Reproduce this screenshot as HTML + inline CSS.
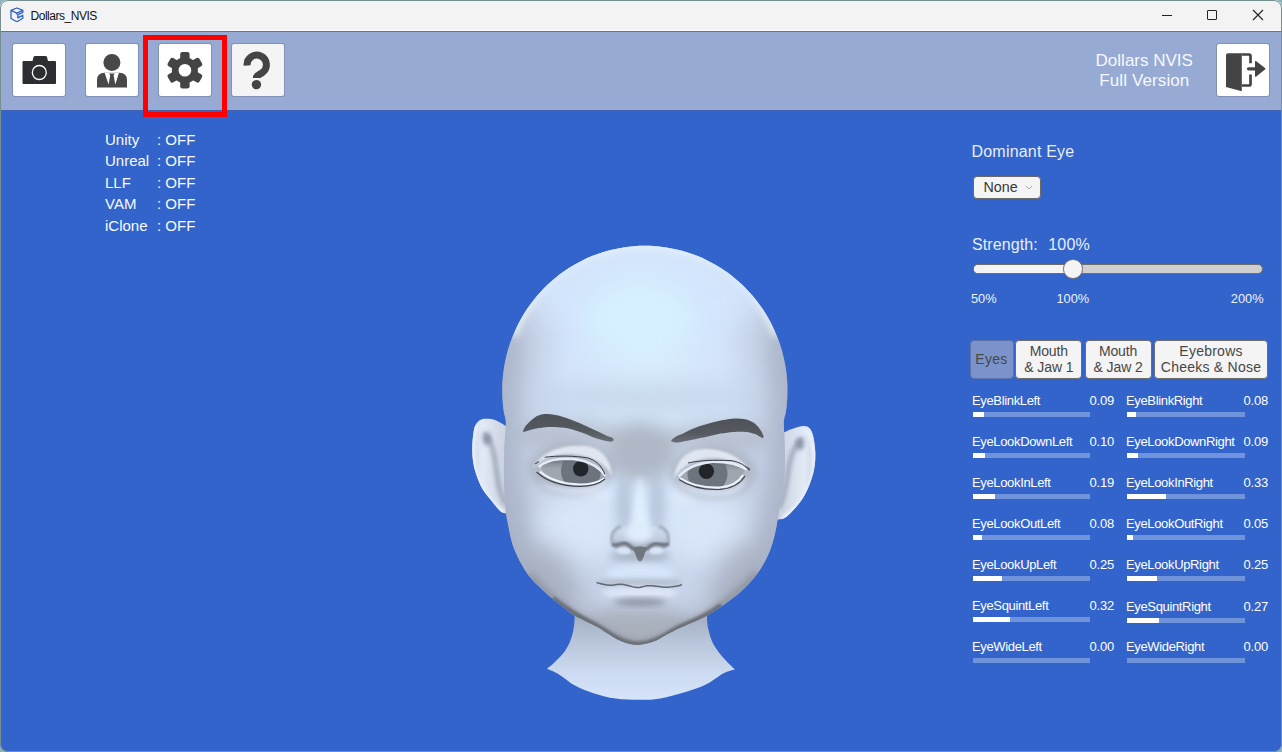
<!DOCTYPE html>
<html><head><meta charset="utf-8">
<style>
*{margin:0;padding:0;box-sizing:border-box}
html,body{width:1282px;height:752px;overflow:hidden;background:#8ab4bc}
body{font-family:"Liberation Sans",sans-serif;position:relative}
.abs{position:absolute}
#win{position:absolute;left:0;top:0;width:1282px;height:752px;border-radius:8px;overflow:hidden;background:#f3f3f3}
#main{position:absolute;left:0;top:110px;width:1282px;height:642px;background:#3264cc}
#frame{position:absolute;left:0;top:0;width:1282px;height:752px;border-radius:8px;border:1px solid #76908f;pointer-events:none}
#title{position:absolute;left:0;top:0;width:1282px;height:30px;background:#f3f3f3}
#tline{position:absolute;left:0;top:30px;width:1282px;height:1px;background:#fbfbf9}
#tline2{position:absolute;left:0;top:31px;width:1282px;height:1px;background:#5573b5}
#toolbar{position:absolute;left:0;top:32px;width:1282px;height:78px;background:#97aad4}
.btn{position:absolute;top:44px;width:52px;height:52px;background:#fff;border-radius:2px;box-shadow:0 0 0 1px rgba(90,100,130,.35)}
.t{position:absolute;white-space:nowrap;line-height:1;color:#fff}
.lbl{font-size:13px;letter-spacing:-0.35px}
.val{font-size:13px;text-align:right;letter-spacing:-0.2px}
.bar{position:absolute;height:5px;background:#7094dc}
.fill{position:absolute;left:0;top:0;height:5px;background:#fff}
.tab{position:absolute;top:339.5px;height:39.3px;background:#f4f4f4;border:1px solid #6c6c6c;border-radius:4px;color:#474747;font-size:14px;line-height:16.4px;text-align:center;display:flex;align-items:center;justify-content:center;padding-top:0.5px}
</style></head><body>
<div id="win">
  <div id="main"></div>
  <div id="title"></div>
  <div id="tline"></div>
  <div id="tline2"></div>
  <!-- app icon -->
  <svg class="abs" style="left:0;top:0" width="30" height="30" viewBox="0 0 30 30">
    <g fill="none" stroke="#2f60c0" stroke-width="1.3" stroke-linejoin="round">
      <path d="M11,10.4 L16.9,8 L22.8,10.4 L16.9,13.1 Z"/>
      <path d="M11,10.4 V18.5 L16.9,21.7"/>
      <path d="M16.9,13.1 V14.5"/>
      <path d="M22.8,10.4 V12.3 L17.8,14.8 V17.8 L22.8,15.3 V18.3 L16.9,21.7"/>
    </g>
  </svg>
  <div class="t" style="left:30.5px;top:10px;font-size:12px;color:#111;letter-spacing:-0.47px">Dollars_NVIS</div>
  <!-- window controls -->
  <div class="abs" style="left:1162px;top:15px;width:10px;height:1px;background:#222"></div>
  <div class="abs" style="left:1207px;top:10px;width:10px;height:10px;border:1px solid #222;border-radius:1px"></div>
  <svg class="abs" style="left:1252px;top:9px" width="12" height="12" viewBox="0 0 12 12"><path d="M1 1 L11 11 M11 1 L1 11" stroke="#222" stroke-width="1.1"/></svg>

  <div id="toolbar"></div>
  <div class="abs" style="left:0;top:110px;width:1282px;height:1px;background:#4062b0"></div>
  <div class="btn" style="left:13px"></div>
  <div class="btn" style="left:86px"></div>
  <div class="btn" style="left:159px"></div>
  <div class="btn" style="left:232px;background:#f4f4f4"></div>
  <div class="btn" style="left:1217px"></div>
  <svg class="abs" style="left:0;top:0" width="1282" height="110" viewBox="0 0 1282 110">
    <!-- camera -->
    <path d="M23.5,61 H32.5 L33.5,57 Q34,56 35,56 H45.5 Q46.5,56 47,57 L48,61 H55 Q56,61 56,62 V83 Q56,84 55,84 H23.5 Q22.5,84 22.5,83 V62 Q22.5,61 23.5,61 Z" fill="#2c2e31"/>
    <circle cx="39.3" cy="72.5" r="7" fill="none" stroke="#fff" stroke-width="1.3"/>
    <!-- person -->
    <circle cx="111.9" cy="62.4" r="8.5" fill="#484848"/>
    <path d="M97,87.5 V80 Q97,73 104.5,72.8 H119.5 Q127,73 127,80 V87.5 Z" fill="#484848"/>
    <path d="M104.6,72.8 L108.6,84.5 L110.2,75.5 L109.2,73.6 H114.6 L113.6,75.5 L115.3,84.5 L119,72.8 Z" fill="#fff"/>
    <!-- gear -->
    <g transform="translate(184.9,70.2)" fill="#444">
      <circle r="13"/><rect x="-4.7" y="-18.3" width="9.4" height="10" rx="2.2" transform="rotate(0)"/><rect x="-4.7" y="-18.3" width="9.4" height="10" rx="2.2" transform="rotate(60)"/><rect x="-4.7" y="-18.3" width="9.4" height="10" rx="2.2" transform="rotate(120)"/><rect x="-4.7" y="-18.3" width="9.4" height="10" rx="2.2" transform="rotate(180)"/><rect x="-4.7" y="-18.3" width="9.4" height="10" rx="2.2" transform="rotate(240)"/><rect x="-4.7" y="-18.3" width="9.4" height="10" rx="2.2" transform="rotate(300)"/>
      <circle r="6.3" fill="#fff"/>
    </g>
    <!-- question -->
    <path d="M247.1,65.5 A9.65,9.65 0 1 1 262.5,72.5 C258,75.5 256.4,76 256.4,78" fill="none" stroke="#444" stroke-width="7"/>
    <circle cx="256.4" cy="84.6" r="4.7" fill="#444"/>
    <!-- exit -->
    <path d="M1228,53.2 H1241.8 V91.3 L1226,87.1 V55.2 Q1226,53.2 1228,53.2 Z" fill="#444"/>
    <path d="M1241.8,54.5 H1249 Q1250.5,54.5 1250.5,56 V63.2 M1250.5,74.4 V84 Q1250.5,85.5 1249,85.5 H1241.8" fill="none" stroke="#444" stroke-width="2.7"/>
    <path d="M1248.5,68.8 H1257" stroke="#444" stroke-width="3.2" stroke-linecap="round"/>
    <path d="M1255.6,61.5 L1264.9,68.8 L1255.6,76.2 Z" fill="#444" stroke="#444" stroke-width="1.2" stroke-linejoin="round"/>
  </svg>
  <div class="abs" style="left:143px;top:35px;width:84px;height:82px;border:5px solid #ff0000"></div>

  <div class="t" style="left:1095.6px;top:52.2px;font-size:17px;color:#f6f8fd">Dollars NVIS</div>
  <div class="t" style="left:1099.2px;top:72px;font-size:17px;color:#f6f8fd;letter-spacing:0.12px">Full Version</div>

  <!-- head -->
  <svg class="abs" style="left:0;top:0" width="1282" height="752" viewBox="0 0 1282 752">
    <defs>
      <linearGradient id="gNeck" x1="0" y1="617" x2="0" y2="700" gradientUnits="userSpaceOnUse">
        <stop offset="0" stop-color="#a4afc2"/>
        <stop offset="0.3" stop-color="#b8c5da"/>
        <stop offset="0.7" stop-color="#cedcf3"/>
        <stop offset="1" stop-color="#d6e4fa"/>
      </linearGradient>
      <radialGradient id="gHead" cx="0" cy="0" r="1" fx="0" fy="-0.4" gradientUnits="userSpaceOnUse" gradientTransform="translate(645,425) scale(152,255)">
        <stop offset="0" stop-color="#dbefff"/>
        <stop offset="0.5" stop-color="#d3e4fb"/>
        <stop offset="0.8" stop-color="#c6d2e8"/>
        <stop offset="1" stop-color="#adb5c5"/>
      </radialGradient>
      <linearGradient id="gEarL" x1="472" y1="0" x2="506" y2="0" gradientUnits="userSpaceOnUse">
        <stop offset="0" stop-color="#ccd5e4"/>
        <stop offset="0.3" stop-color="#e2eaf6"/>
        <stop offset="1" stop-color="#cad2e0"/>
      </linearGradient>
      <linearGradient id="gEarR" x1="815" y1="0" x2="779" y2="0" gradientUnits="userSpaceOnUse">
        <stop offset="0" stop-color="#ccd5e4"/>
        <stop offset="0.3" stop-color="#e2eaf6"/>
        <stop offset="1" stop-color="#cad2e0"/>
      </linearGradient>
      <linearGradient id="gBrow" x1="0" y1="0" x2="0" y2="1">
        <stop offset="0" stop-color="#4f5258"/>
        <stop offset="0.6" stop-color="#555960"/>
        <stop offset="1" stop-color="#6a6e76"/>
      </linearGradient>
      <linearGradient id="gNose" x1="0" y1="527" x2="0" y2="549" gradientUnits="userSpaceOnUse">
        <stop offset="0" stop-color="#cfdbee"/>
        <stop offset="0.5" stop-color="#c4cfe2"/>
        <stop offset="1" stop-color="#98a2b3"/>
      </linearGradient>
      <clipPath id="cHead"><path id="headPath" d="M783.8,423.0 C784.0,416.7 785.3,415.9 785.8,412.4 C786.4,408.8 786.8,405.2 787.0,401.6 C787.3,398.0 787.4,394.4 787.4,390.8 C787.5,387.2 787.3,383.5 787.1,379.9 C786.8,376.3 786.4,372.7 785.9,369.2 C785.4,365.6 784.7,362.0 783.9,358.5 C783.1,355.0 782.2,351.5 781.2,348.0 C780.1,344.6 778.9,341.2 777.6,337.8 C776.3,334.5 774.9,331.1 773.4,327.9 C771.8,324.6 770.2,321.4 768.4,318.3 C766.6,315.2 764.7,312.1 762.7,309.1 C760.7,306.1 758.6,303.2 756.4,300.4 C754.2,297.6 751.9,294.8 749.4,292.2 C747.0,289.5 744.5,287.0 741.9,284.5 C739.3,282.0 736.6,279.7 733.8,277.4 C731.0,275.2 728.2,273.0 725.2,271.0 C722.3,269.0 719.3,267.0 716.2,265.2 C713.1,263.4 710.0,261.7 706.8,260.2 C703.6,258.6 700.3,257.1 697.0,255.8 C693.7,254.5 690.3,253.3 686.9,252.2 C683.5,251.2 680.1,250.2 676.6,249.4 C673.1,248.6 669.6,248.0 666.1,247.4 C662.6,246.9 659.1,246.5 655.5,246.2 C652.0,245.9 648.4,245.8 644.9,245.8 C641.3,245.8 637.7,245.9 634.2,246.2 C630.6,246.5 627.1,246.9 623.6,247.4 C620.1,248.0 616.6,248.6 613.1,249.4 C609.6,250.2 606.2,251.2 602.8,252.2 C599.4,253.3 596.0,254.5 592.7,255.8 C589.4,257.1 586.1,258.6 582.9,260.2 C579.7,261.7 576.6,263.4 573.5,265.2 C570.4,267.0 567.4,269.0 564.5,271.0 C561.5,273.0 558.7,275.2 555.9,277.4 C553.1,279.7 550.4,282.0 547.8,284.5 C545.2,287.0 542.7,289.5 540.3,292.2 C537.8,294.8 535.5,297.6 533.3,300.4 C531.1,303.2 529.0,306.1 527.0,309.1 C525.0,312.1 523.1,315.2 521.3,318.3 C519.5,321.4 517.9,324.6 516.3,327.9 C514.8,331.1 513.4,334.5 512.1,337.8 C510.8,341.2 509.6,344.6 508.5,348.0 C507.5,351.5 506.6,355.0 505.8,358.5 C505.0,362.0 504.3,365.6 503.8,369.2 C503.3,372.7 502.9,376.3 502.6,379.9 C502.4,383.5 502.2,387.2 502.3,390.8 C502.3,394.4 502.4,398.0 502.7,401.6 C502.9,405.2 503.3,408.8 503.9,412.4 C504.4,415.9 505.8,416.7 505.9,423.0 C505.9,429.3 504.5,440.5 504.2,450.0 C503.9,459.5 503.8,470.0 504.0,480.0 C504.2,490.0 504.9,502.7 505.6,510.0 C506.3,517.3 507.1,518.9 508.0,523.9 C508.9,528.9 510.0,535.1 511.3,539.9 C512.6,544.7 514.0,548.6 515.7,552.6 C517.4,556.6 519.2,560.0 521.3,563.8 C523.4,567.6 525.6,571.5 528.5,575.2 C531.4,578.9 534.9,582.4 538.6,586.1 C542.3,589.8 546.6,593.8 550.8,597.3 C555.0,600.8 559.6,604.2 563.6,607.3 C567.6,610.4 571.1,613.5 574.7,615.8 C578.4,618.1 581.7,619.3 585.5,621.2 C589.3,623.1 593.3,624.7 597.4,627.0 C601.5,629.3 605.8,632.5 610.0,635.0 C614.2,637.5 617.7,640.1 622.4,641.8 C627.1,643.5 632.8,645.0 638.0,645.0 C643.2,645.0 648.9,643.3 653.6,641.6 C658.3,639.9 661.8,637.2 666.0,635.0 C670.2,632.8 674.6,630.4 678.6,628.5 C682.6,626.6 686.3,625.1 690.0,623.5 C693.7,621.9 697.3,620.6 701.0,618.8 C704.7,617.0 708.0,615.0 712.0,612.5 C716.0,610.0 720.7,607.0 725.3,603.7 C729.9,600.4 735.2,596.5 739.7,592.5 C744.2,588.5 748.7,584.0 752.4,579.7 C756.1,575.4 759.1,571.3 762.0,566.5 C764.9,561.7 767.7,556.2 769.8,551.0 C771.9,545.8 773.4,540.4 774.7,535.1 C776.0,529.8 776.2,528.3 777.8,519.1 C779.3,509.9 782.8,491.5 784.0,480.0 C785.2,468.5 785.0,459.5 785.0,450.0 C785.0,440.5 783.7,429.3 783.8,423.0 Z"/></clipPath>
      <clipPath id="cEarL"><path d="M506,426 C504.8,425.3 501.1,422.8 498.6,421.7 C496.2,420.6 494.0,419.5 491.3,419.1 C488.6,418.7 484.9,418.4 482.5,419.1 C480.1,419.8 478.1,421.3 476.7,423.2 C475.2,425.1 474.5,426.6 473.8,430.5 C473.1,434.4 472.4,441.4 472.3,446.5 C472.2,451.6 472.3,456.3 473.0,461.2 C473.7,466.1 475.1,471.2 476.7,475.8 C478.3,480.4 480.1,484.9 482.5,489.0 C484.9,493.1 488.4,497.0 491.3,500.6 C494.2,504.2 497.7,508.8 500.1,510.9 C502.6,513.0 505.0,513.1 506.0,513.5 Z"/></clipPath>
      <clipPath id="cEarR"><path d="M782,433.3 C783.6,432.6 788.3,430.1 791.9,428.9 C795.5,427.7 800.7,426.1 803.6,426.0 C806.5,425.9 807.9,426.6 809.5,428.2 C811.1,429.8 812.1,431.6 813.1,435.5 C814.1,439.4 815.0,446.4 815.3,451.5 C815.5,456.6 815.3,461.3 814.6,466.2 C813.9,471.1 812.7,475.7 810.9,480.8 C809.1,485.9 806.5,492.0 803.6,496.9 C800.7,501.8 796.6,506.5 793.4,510.0 C790.2,513.5 787.3,516.5 784.6,518.1 C781.9,519.7 778.3,519.5 777.0,519.8 Z"/></clipPath>
      <clipPath id="cEyeL"><path d="M541.2,467.9 C544,463 548,461 551.9,460.8 C558,459.8 562,459.5 567.9,459.6 C574,460 579,460.8 583.8,462 C589,463.5 592,465 595.8,467.1 C600,470 603,473 605.4,476.7 C604,479 602,480.5 599.8,481.5 C594,483.5 589,484.5 583.8,484.3 C578,484.3 573,484.3 567.9,483.9 C561,482.5 556,480.5 551.9,478.3 C548,476 545,474 543.1,471.9 Z"/></clipPath>
      <clipPath id="cEyeR"><path d="M679.5,477 C683,472 688,467.5 693,465.5 C699,463.5 706,462.5 712.8,462.5 C720,462.5 727,463 733,464 C738,465.5 742,467.5 745,470 C742,475 740,479 737,481.5 C731,485 725,486.5 718.2,487 C712,487.3 705,487.3 698,486.2 C691,484.5 685,481.5 679.5,477 Z"/></clipPath>
      <filter id="b05" x="-20%" y="-20%" width="140%" height="140%"><feGaussianBlur stdDeviation="0.5"/></filter>
      <filter id="b1" x="-20%" y="-20%" width="140%" height="140%"><feGaussianBlur stdDeviation="1"/></filter>
      <filter id="b2" x="-30%" y="-30%" width="160%" height="160%"><feGaussianBlur stdDeviation="2"/></filter>
      <filter id="b3" x="-30%" y="-30%" width="160%" height="160%"><feGaussianBlur stdDeviation="3"/></filter>
      <filter id="b4" x="-30%" y="-30%" width="160%" height="160%"><feGaussianBlur stdDeviation="4"/></filter>
      <filter id="b5" x="-40%" y="-40%" width="180%" height="180%"><feGaussianBlur stdDeviation="5"/></filter>
      <filter id="b8" x="-50%" y="-50%" width="200%" height="200%"><feGaussianBlur stdDeviation="8"/></filter>
      <filter id="b12" x="-60%" y="-60%" width="220%" height="220%"><feGaussianBlur stdDeviation="12"/></filter>
    </defs>
    <!-- neck -->
    <path d="M574.7,590 L574.7,616.3 C574.6,618.0 574.5,622.6 573.9,626.4 C573.3,630.2 572.4,635.0 571.0,639.0 C569.6,643.0 567.9,646.6 565.3,650.4 C562.7,654.2 558.2,658.7 555.2,661.8 C552.2,664.9 548.4,667.6 547.0,668.8 C549.0,669.7 554.3,671.6 559.0,674.4 C563.7,677.2 569.5,682.6 575.4,685.8 C581.3,689.0 587.6,691.3 594.3,693.4 C601.0,695.5 608.2,697.4 615.8,698.5 C623.4,699.6 632.6,699.8 640.0,699.8 C647.4,699.8 652.7,699.8 660.3,698.5 C667.9,697.2 677.9,694.4 685.5,692.1 C693.1,689.8 699.5,687.8 705.8,684.6 C712.1,681.5 718.7,675.7 723.5,673.2 C728.3,670.7 732.9,670.0 734.8,669.4 C732.9,667.5 727.1,662.2 723.5,658.0 C719.9,653.8 715.8,648.9 713.3,644.1 C710.8,639.3 709.3,633.4 708.3,629.0 C707.2,624.6 707.2,619.5 707.0,617.6 L707,590 Z" fill="url(#gNeck)"/>
    <!-- ears -->
    <path d="M506,426 C504.8,425.3 501.1,422.8 498.6,421.7 C496.2,420.6 494.0,419.5 491.3,419.1 C488.6,418.7 484.9,418.4 482.5,419.1 C480.1,419.8 478.1,421.3 476.7,423.2 C475.2,425.1 474.5,426.6 473.8,430.5 C473.1,434.4 472.4,441.4 472.3,446.5 C472.2,451.6 472.3,456.3 473.0,461.2 C473.7,466.1 475.1,471.2 476.7,475.8 C478.3,480.4 480.1,484.9 482.5,489.0 C484.9,493.1 488.4,497.0 491.3,500.6 C494.2,504.2 497.7,508.8 500.1,510.9 C502.6,513.0 505.0,513.1 506.0,513.5 Z" fill="url(#gEarL)"/>
    <g clip-path="url(#cEarL)">
      <path d="M477,424 C471,440 471,465 480,485 C487,498 495,507 504,513" fill="none" stroke="#e6eefa" stroke-width="5" filter="url(#b1)"/>
      <path d="M484,433 C490,438 494,450 496,468 C498,484 500,496 506,504" fill="none" stroke="#98a2b4" stroke-width="4" filter="url(#b2)"/>
      <ellipse cx="487" cy="439" rx="4" ry="6" fill="#8a94a6" filter="url(#b2)"/>
      <path d="M506,425 V513" stroke="#a8b2c4" stroke-width="6" filter="url(#b2)"/>
    </g>
    <path d="M782,433.3 C783.6,432.6 788.3,430.1 791.9,428.9 C795.5,427.7 800.7,426.1 803.6,426.0 C806.5,425.9 807.9,426.6 809.5,428.2 C811.1,429.8 812.1,431.6 813.1,435.5 C814.1,439.4 815.0,446.4 815.3,451.5 C815.5,456.6 815.3,461.3 814.6,466.2 C813.9,471.1 812.7,475.7 810.9,480.8 C809.1,485.9 806.5,492.0 803.6,496.9 C800.7,501.8 796.6,506.5 793.4,510.0 C790.2,513.5 787.3,516.5 784.6,518.1 C781.9,519.7 778.3,519.5 777.0,519.8 Z" fill="url(#gEarR)"/>
    <g clip-path="url(#cEarR)">
      <path d="M806,428 C815,440 816,462 812,480 C806,498 795,510 782,519" fill="none" stroke="#e6eefa" stroke-width="5" filter="url(#b1)"/>
      <path d="M802,438 C796,444 790,456 788,472 C786,488 784,498 779,508" fill="none" stroke="#98a2b4" stroke-width="4" filter="url(#b2)"/>
      <ellipse cx="800" cy="444" rx="4" ry="6" fill="#8a94a6" filter="url(#b2)"/>
      <path d="M780,430 V520" stroke="#a8b2c4" stroke-width="6" filter="url(#b2)"/>
    </g>
    <!-- head base -->
    <use href="#headPath" fill="url(#gHead)"/>
    <g clip-path="url(#cHead)">
      <!-- edge darkening -->
      <path d="M512,335 C506,360 503,390 503,430 C503,480 508,530 520,560 C530,580 548,598 570,612" fill="none" stroke="#a8b2c8" stroke-width="34" opacity="0.6" filter="url(#b12)"/>
      <path d="M778,335 C784,360 787,390 787,430 C787,480 782,530 770,560 C760,580 742,598 720,612" fill="none" stroke="#a8b2c8" stroke-width="34" opacity="0.6" filter="url(#b12)"/>
      <!-- top rim light -->
      <path d="M512,335 C532,282 588,246 645,245 C702,246 758,282 778,335" fill="none" stroke="#effbff" stroke-width="10" opacity="0.9" filter="url(#b4)"/>
      <!-- forehead light -->
      <ellipse cx="645" cy="295" rx="115" ry="48" fill="#d4e6fd" opacity="0.85" filter="url(#b12)"/>
      <ellipse cx="640" cy="318" rx="55" ry="38" fill="#d6f1ff" opacity="0.9" filter="url(#b12)"/>
      <ellipse cx="643" cy="398" rx="105" ry="16" fill="#bccae0" opacity="0.55" filter="url(#b12)"/>
      <!-- glabella / brow gray -->
      <ellipse cx="641" cy="452" rx="36" ry="30" fill="#a9b0bd" opacity="0.85" filter="url(#b8)"/>
      <ellipse cx="570" cy="436" rx="55" ry="16" fill="#aeb4c0" opacity="0.65" filter="url(#b8)"/>
      <ellipse cx="716" cy="439" rx="55" ry="16" fill="#aeb4c0" opacity="0.65" filter="url(#b8)"/>
      <!-- cheeks light -->
      <ellipse cx="578" cy="528" rx="40" ry="34" fill="#dbe8fa" opacity="0.85" filter="url(#b12)"/>
      <ellipse cx="705" cy="528" rx="40" ry="34" fill="#dbe8fa" opacity="0.85" filter="url(#b12)"/>
      <!-- under-eye highlight -->
      <ellipse cx="598" cy="492" rx="14" ry="9" fill="#e0ecfc" opacity="0.8" filter="url(#b5)"/>
      <ellipse cx="684" cy="495" rx="14" ry="9" fill="#e0ecfc" opacity="0.8" filter="url(#b5)"/>
      <!-- lower face sides gray -->
      <ellipse cx="545" cy="585" rx="30" ry="40" fill="#a4acba" opacity="0.6" filter="url(#b12)"/>
      <ellipse cx="745" cy="585" rx="30" ry="40" fill="#a4acba" opacity="0.6" filter="url(#b12)"/>
      <!-- chin gray -->
      <ellipse cx="638" cy="628" rx="62" ry="20" fill="#a7aeba" opacity="0.9" filter="url(#b8)"/>
      <!-- jaw rim -->
      <path d="M528,575 C540,590 558,604 575,616 C590,624 610,640 638,645 C665,641 690,624 707,616 C725,604 745,588 758,574" fill="none" stroke="#8a909a" stroke-width="9" opacity="0.8" filter="url(#b3)"/>
      <path d="M552,599 C565,610 585,621 597,627 C610,635 622,645 638,645 C656,645 668,634 680,628 C695,622 710,615 722,606" fill="none" stroke="#6c7077" stroke-width="7" filter="url(#b1)"/>
      <!-- eye sockets -->
      <ellipse cx="572" cy="468" rx="44" ry="26" fill="#a8aebb" opacity="0.75" filter="url(#b5)"/>
      <ellipse cx="713" cy="472" rx="44" ry="26" fill="#a8aebb" opacity="0.75" filter="url(#b5)"/>
      <path d="M533,468 C542,450 565,444 586,446 C602,448 611,460 612,476 C604,462 590,455 570,454 C552,454 541,460 533,468 Z" fill="#e0e6f1" filter="url(#b1)"/>
      <path d="M751,474 C743,456 722,448 703,449 C686,450 676,461 674,478 C683,465 696,458 714,458 C732,459 744,465 751,474 Z" fill="#e0e6f1" filter="url(#b1)"/>
      <path d="M538,482 C550,492 570,496 590,494 C600,492 606,486 608,478 C600,486 590,488 578,488 C560,488 548,486 538,482 Z" fill="#dbe5f5" opacity="0.8" filter="url(#b2)"/>
      <path d="M676,482 C688,494 708,498 726,496 C738,494 746,486 748,476 C740,485 730,490 718,490 C700,490 688,487 676,482 Z" fill="#dbe5f5" opacity="0.8" filter="url(#b2)"/>
      <!-- nose bridge -->
      <ellipse cx="624" cy="505" rx="8" ry="30" fill="#a6b1c6" opacity="0.55" filter="url(#b5)"/>
      <ellipse cx="657" cy="505" rx="8" ry="30" fill="#a6b1c6" opacity="0.55" filter="url(#b5)"/>
      <path d="M638,478 C636,495 633,512 631,530 L649,530 C647,512 644,495 642,478 Z" fill="#e2f0ff" opacity="0.9" filter="url(#b3)"/>
      <!-- nose -->
      <ellipse cx="640" cy="556" rx="30" ry="7" fill="#98a1b0" opacity="0.55" filter="url(#b3)"/>
      <path d="M611.6,541 C611.5,531 618,526.5 627,527 L653,527 C662,526.5 669,531 668.8,542 C668,548 664,550 656,549 L624,549 C616,550 612,548 611.6,541 Z" fill="url(#gNose)" filter="url(#b1)"/>
      <path d="M613.5,546 C609.5,538 612,529 621,526.5" fill="none" stroke="#a3adbf" stroke-width="3" filter="url(#b1)"/>
      <path d="M667,546 C670.5,538 668,529 659,526.5" fill="none" stroke="#a3adbf" stroke-width="3" filter="url(#b1)"/>
      <ellipse cx="639" cy="533" rx="13" ry="10" fill="#dfedfd" filter="url(#b3)"/>
      <ellipse cx="624" cy="550.5" rx="7.5" ry="3.8" fill="#d8e4f6" filter="url(#b1)"/>
      <ellipse cx="656" cy="550.5" rx="7.5" ry="3.8" fill="#d8e4f6" filter="url(#b1)"/>
      <path d="M612.5,544 C615,547 619,544 623.6,543.2 C628,543.5 631,546.5 633.5,550" fill="none" stroke="#6c717b" stroke-width="3.2" filter="url(#b1)"/>
      <path d="M646.5,550 C649,546.5 652,543.8 656.5,543.6 C661,543.8 664.5,547 668.5,543.5" fill="none" stroke="#6c717b" stroke-width="3.2" filter="url(#b1)"/>
      <path d="M631.5,548 C635,551 636,557 638,560.5 C639,561.8 641,561.8 642,560.5 C644,557 645,551 648,548 C643,546 636,546 631.5,548 Z" fill="#6f747e" filter="url(#b05)"/>
      <!-- philtrum/upper lip light -->
      <ellipse cx="640" cy="574" rx="34" ry="10" fill="#d8e6fb" opacity="0.9" filter="url(#b3)"/>
      <!-- mouth -->
      <ellipse cx="640" cy="582" rx="42" ry="4" fill="#a2aab8" opacity="0.55" filter="url(#b2)"/>
      <ellipse cx="640" cy="593" rx="38" ry="6" fill="#dbe5f6" filter="url(#b2)"/>
      <ellipse cx="640" cy="602" rx="26" ry="4" fill="#858c98" opacity="0.85" filter="url(#b3)"/>
      <path d="M596.5,582.5 C597.6,582.8 600.6,583.8 603.0,584.3 C605.4,584.8 608.6,585.2 610.8,585.3 C613.0,585.3 614.1,584.8 616.0,584.6 C617.9,584.4 620.2,584.1 621.9,584.2 C623.6,584.3 624.6,584.7 626.0,585.0 C627.4,585.3 629.1,585.8 630.5,586.2 C631.9,586.6 633.2,587.0 634.5,587.2 C635.8,587.4 636.9,587.7 638.2,587.6 C639.5,587.5 641.1,587.1 642.5,586.8 C643.9,586.5 645.4,586.0 646.8,585.8 C648.2,585.6 649.4,585.7 651.0,585.8 C652.6,585.9 654.5,586.0 656.2,586.2 C657.9,586.4 659.3,586.6 661.0,586.8 C662.7,587.0 664.7,587.3 666.5,587.3 C668.3,587.3 670.0,587.0 672.0,586.8 C674.0,586.5 676.9,586.2 678.6,585.8 C680.3,585.4 681.4,584.7 682.0,584.5 " fill="none" stroke="#626770" stroke-width="1.5" filter="url(#b05)"/>
      <!-- eyebrows -->
      <path d="M522.7,432 C524,428 526,425 527.9,423.5 C531,420 534,418 536.5,416.2 C539,415 542,414.3 545,414 C548,414 552,414.4 555.3,414.9 C559,415.5 563,416.8 566.5,417.9 C571,419.5 575,421.3 579.4,423 C584,425 588,427 592.3,429 C597,431 601,433 605.1,435 C608,436.5 611,437 612.5,438 C614.5,439.5 614,441.5 611,441.8 C607,441.5 601,440 596.5,438.5 C592,437 588,435 583.7,433.3 C579,431.5 575,430.3 570.8,429 C566,428 562,427.5 557.9,427.3 C553,427 549,427 545,427.3 C541,427.8 537,428.3 533.9,429 C531,429.8 528,430.6 525.3,431.6 Z" fill="url(#gBrow)"/>
      <path d="M671,441.3 C672,438 678,435.5 682.2,434 C688,431 693,428.5 699.3,426.3 C705,424.5 711,422.8 716.5,421.6 C722,420.5 728,419 733.7,418.6 C738,418.4 742,418.6 746.5,419.4 C750,420.5 753,422 755.1,423.7 C757,425.5 759,427.5 760.3,429.7 C762,432 763,434.5 763.7,436.6 L762.9,438.3 C760,437 758,435.5 755.1,434 C752,433 749,432.3 746.5,431.9 C742,431.8 738,431.8 733.7,431.9 C729,432.3 725,432.9 720.8,433.6 C716,434.5 712,435.5 707.9,436.6 C702,438 696,439 690.8,440 C686,441 682,441.8 677.9,442.6 C675,442.6 673,442 671,441.3 Z" fill="url(#gBrow)"/>
    </g>
    <!-- eyes -->
    <g>
      <g clip-path="url(#cEyeL)">
        <rect x="530" y="450" width="85" height="45" fill="#a0a6b0"/>
        <rect x="530" y="452" width="85" height="12" fill="#7a808a" filter="url(#b3)"/>
        <circle cx="581" cy="471" r="20" fill="#6e747e"/>
        <rect x="530" y="452" width="85" height="9" fill="#60666f" opacity="0.5" filter="url(#b2)"/>
        <circle cx="580.7" cy="468.7" r="7.7" fill="#222529"/>
      </g>
      <path d="M538.5,467 C545,461 552,459.5 567,458.8 C585,459.1 597,464.5 605.5,476" fill="none" stroke="#e4ebf6" stroke-width="2.6"/>
      <path d="M544.7,457.3 C556,455.6 575,455.6 588,458 C596,460.5 601,465 605,474.5" fill="none" stroke="#3a3e45" stroke-width="1"/>
      <path d="M535,464 L539,461.5" fill="none" stroke="#50545c" stroke-width="1.2"/>
      <path d="M540,471.5 C547,477.5 560,483.8 580,484.5 C592,484.5 599,482 604,478.5" fill="none" stroke="#eef3fc" stroke-width="2"/>
      <path d="M536.5,472 C545,479.8 560,486.2 580,486.4 C592,486.4 600,483.2 605,479" fill="none" stroke="#3e424a" stroke-width="1.1"/>
      <g clip-path="url(#cEyeR)">
        <rect x="670" y="452" width="85" height="45" fill="#a0a6b0"/>
        <rect x="670" y="454" width="85" height="12" fill="#7a808a" filter="url(#b3)"/>
        <circle cx="707.5" cy="473.7" r="20" fill="#6e747e"/>
        <rect x="670" y="454" width="85" height="9" fill="#60666f" opacity="0.5" filter="url(#b2)"/>
        <circle cx="706.4" cy="471.2" r="7.7" fill="#222529"/>
      </g>
      <path d="M678.5,476.5 C686,468.5 695,464 712,461.6 C728,461.4 739,464 746.5,469.5" fill="none" stroke="#e4ebf6" stroke-width="2.6"/>
      <path d="M688,463 C700,460.2 715,460 731,460.6 C740,461.8 746,466 749.5,471" fill="none" stroke="#3a3e45" stroke-width="1"/>
      <path d="M745,466 L750,469.5" fill="none" stroke="#50545c" stroke-width="1.2"/>
      <path d="M680,478 C690,484.8 704,488 720,487.5 C731,486.7 738,483 743,475" fill="none" stroke="#eef3fc" stroke-width="2"/>
      <path d="M679,479.5 C690,486.8 703,490.2 720,489.4 C732,488.4 740,484.2 745,476" fill="none" stroke="#3e424a" stroke-width="1.1"/>
    </g>
  </svg>
  <!-- status -->
  <div class="t" style="left:105px;top:129px;font-size:15px;line-height:21.45px;color:#f8faff">Unity<br>Unreal<br>LLF<br>VAM<br>iClone</div>
  <div class="t" style="left:157px;top:129px;font-size:15px;line-height:21.45px;color:#f8faff">: OFF<br>: OFF<br>: OFF<br>: OFF<br>: OFF</div>

  <!-- right panel -->
  <div class="t" style="left:971.5px;top:144px;font-size:16px;color:#e8eefa;letter-spacing:0.2px">Dominant Eye</div>
  <div class="abs" style="left:973px;top:175.5px;width:68px;height:23px;background:#f4f4f4;border:1px solid #6a6a6a;border-radius:4px"></div>
  <div class="t" style="left:983.5px;top:179.5px;font-size:14.3px;color:#383838">None</div>
  <svg class="abs" style="left:1025px;top:185px" width="8" height="5" viewBox="0 0 8 5"><path d="M1 1 L4 4 L7 1" fill="none" stroke="#aaa" stroke-width="1"/></svg>

  <div class="t" style="left:972px;top:237.3px;font-size:16px;color:#e8eefa;letter-spacing:0.1px">Strength:</div>
  <div class="t" style="left:1048.3px;top:237.3px;font-size:16px;color:#e8eefa;letter-spacing:0.15px">100%</div>
  <div class="abs" style="left:973px;top:264px;width:290px;height:9.6px;background:#d0d0d0;border:1px solid #6e6e6e;border-radius:5px"></div>
  <div class="abs" style="left:974px;top:265px;width:100px;height:7.6px;background:#f3f3f3;border-radius:4px 0 0 4px"></div>
  <div class="abs" style="left:1063.4px;top:259.2px;width:19.4px;height:19.4px;background:#f4f4f4;border:1.2px solid #6a6a6a;border-radius:50%"></div>
  <div class="t" style="left:971px;top:292.5px;font-size:12.8px;color:#eef2fb">50%</div>
  <div class="t" style="left:1056.5px;top:292.5px;font-size:12.8px;color:#eef2fb">100%</div>
  <div class="t" style="left:1230.8px;top:292.5px;font-size:12.8px;color:#eef2fb">200%</div>

  <!-- tabs -->
  <div class="tab" style="left:969.5px;width:44px;background:#7a93cb;border-color:#5d72a8;letter-spacing:0.3px">Eyes</div>
  <div class="tab" style="left:1015.2px;width:67.3px;letter-spacing:-0.1px">Mouth<br>&amp; Jaw 1</div>
  <div class="tab" style="left:1084.6px;width:67px;letter-spacing:-0.1px">Mouth<br>&amp; Jaw 2</div>
  <div class="tab" style="left:1154.2px;width:113.7px;letter-spacing:0.25px">Eyebrows<br>Cheeks &amp; Nose</div>

  <div class="t lbl" style="left:972px;top:393.7px">EyeBlinkLeft</div>
  <div class="t val" style="left:1074px;width:40px;top:393.7px">0.09</div>
  <div class="bar" style="left:973px;top:412px;width:117px"><div class="fill" style="width:11px"></div></div>
  <div class="t lbl" style="left:1126px;top:393.7px">EyeBlinkRight</div>
  <div class="t val" style="left:1228px;width:40px;top:393.7px">0.08</div>
  <div class="bar" style="left:1127px;top:412px;width:118px"><div class="fill" style="width:9px"></div></div>
  <div class="t lbl" style="left:972px;top:434.7px">EyeLookDownLeft</div>
  <div class="t val" style="left:1074px;width:40px;top:434.7px">0.10</div>
  <div class="bar" style="left:973px;top:453px;width:117px"><div class="fill" style="width:12px"></div></div>
  <div class="t lbl" style="left:1126px;top:434.7px">EyeLookDownRight</div>
  <div class="t val" style="left:1228px;width:40px;top:434.7px">0.09</div>
  <div class="bar" style="left:1127px;top:453px;width:118px"><div class="fill" style="width:11px"></div></div>
  <div class="t lbl" style="left:972px;top:475.7px">EyeLookInLeft</div>
  <div class="t val" style="left:1074px;width:40px;top:475.7px">0.19</div>
  <div class="bar" style="left:973px;top:494px;width:117px"><div class="fill" style="width:22px"></div></div>
  <div class="t lbl" style="left:1126px;top:475.7px">EyeLookInRight</div>
  <div class="t val" style="left:1228px;width:40px;top:475.7px">0.33</div>
  <div class="bar" style="left:1127px;top:494px;width:118px"><div class="fill" style="width:39px"></div></div>
  <div class="t lbl" style="left:972px;top:516.7px">EyeLookOutLeft</div>
  <div class="t val" style="left:1074px;width:40px;top:516.7px">0.08</div>
  <div class="bar" style="left:973px;top:535px;width:117px"><div class="fill" style="width:9px"></div></div>
  <div class="t lbl" style="left:1126px;top:516.7px">EyeLookOutRight</div>
  <div class="t val" style="left:1228px;width:40px;top:516.7px">0.05</div>
  <div class="bar" style="left:1127px;top:535px;width:118px"><div class="fill" style="width:6px"></div></div>
  <div class="t lbl" style="left:972px;top:557.7px">EyeLookUpLeft</div>
  <div class="t val" style="left:1074px;width:40px;top:557.7px">0.25</div>
  <div class="bar" style="left:973px;top:576px;width:117px"><div class="fill" style="width:29px"></div></div>
  <div class="t lbl" style="left:1126px;top:557.7px">EyeLookUpRight</div>
  <div class="t val" style="left:1228px;width:40px;top:557.7px">0.25</div>
  <div class="bar" style="left:1127px;top:576px;width:118px"><div class="fill" style="width:30px"></div></div>
  <div class="t lbl" style="left:972px;top:598.7px">EyeSquintLeft</div>
  <div class="t val" style="left:1074px;width:40px;top:598.7px">0.32</div>
  <div class="bar" style="left:973px;top:617px;width:117px"><div class="fill" style="width:37px"></div></div>
  <div class="t lbl" style="left:1126px;top:600.0px">EyeSquintRight</div>
  <div class="t val" style="left:1228px;width:40px;top:600.0px">0.27</div>
  <div class="bar" style="left:1127px;top:618.3px;width:118px"><div class="fill" style="width:32px"></div></div>
  <div class="t lbl" style="left:972px;top:639.7px">EyeWideLeft</div>
  <div class="t val" style="left:1074px;width:40px;top:639.7px">0.00</div>
  <div class="bar" style="left:973px;top:658px;width:117px"><div class="fill" style="width:0px"></div></div>
  <div class="t lbl" style="left:1126px;top:639.7px">EyeWideRight</div>
  <div class="t val" style="left:1228px;width:40px;top:639.7px">0.00</div>
  <div class="bar" style="left:1127px;top:658px;width:118px"><div class="fill" style="width:0px"></div></div>

</div>
<div id="frame"></div>
</body></html>
